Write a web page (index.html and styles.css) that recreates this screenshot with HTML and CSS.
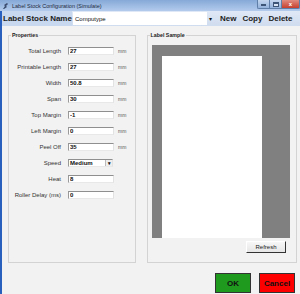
FILE: index.html
```html
<!DOCTYPE html>
<html lang="en">
  <head>
    <meta charset="UTF-8" />
    <meta name="viewport" content="width=device-width, initial-scale=1.0" />
    <title>Label Stock Configuration (Simulate)</title>
    <link rel="stylesheet" href="styles.css">
  </head>
  <body>
    <div class="window">
      <div class="titlebar">
        <svg class="app-icon" width="7" height="8" viewBox="0 0 7 8">
          <path d="M1 7 L3 4 L2 3 L5 1 L6 2 L4 4 L5 5 L2 7 Z" fill="#3a4d6e" />
        </svg>
        <span class="title-text">Label Stock Configuration (Simulate)</span>
        <div class="controls">
          <span class="ctl ctl-min"><i></i></span>
          <span class="ctl ctl-max"><i></i></span>
          <span class="ctl ctl-close">x</span>
        </div>
      </div>

      <div class="frame">
        <div class="toolbar">
          <span class="stock-label">Label Stock Name</span>
          <div class="combo">
            <span class="combo-text">Computype</span>
          </div>
          <span class="combo-arrow">▾</span>
          <span class="tool-btn">New</span>
          <span class="tool-btn">Copy</span>
          <span class="tool-btn">Delete</span>
        </div>

        <div class="content">
          <div class="groups">
            <fieldset class="group group-props">
              <legend>Properties</legend>
              <div class="row">
                <label>Total Length</label>
                <input type="text" value="27" />
                <span class="unit">mm</span>
              </div>
              <div class="row">
                <label>Printable Length</label>
                <input type="text" value="27" />
                <span class="unit">mm</span>
              </div>
              <div class="row">
                <label>Width</label>
                <input type="text" value="50.8" />
                <span class="unit">mm</span>
              </div>
              <div class="row">
                <label>Span</label>
                <input type="text" value="30" />
                <span class="unit">mm</span>
              </div>
              <div class="row">
                <label>Top Margin</label>
                <input type="text" value="-1" />
                <span class="unit">mm</span>
              </div>
              <div class="row">
                <label>Left Margin</label>
                <input type="text" value="0" />
                <span class="unit">mm</span>
              </div>
              <div class="row">
                <label>Peel Off</label>
                <input type="text" value="35" />
                <span class="unit">mm</span>
              </div>
              <div class="row">
                <label>Speed</label>
                <div class="select">
                  <span class="select-text">Medium</span>
                  <span class="select-btn">▾</span>
                </div>
              </div>
              <div class="row">
                <label>Heat</label>
                <input type="text" value="8" />
              </div>
              <div class="row">
                <label>Roller Delay (ms)</label>
                <input type="text" value="0" />
              </div>
            </fieldset>

            <fieldset class="group group-sample">
              <legend>Label Sample</legend>
              <div class="preview">
                <div class="preview-label"></div>
              </div>
              <div class="refresh-row">
                <button type="button" class="refresh">Refresh</button>
              </div>
            </fieldset>
          </div>

          <div class="actions">
            <button type="button" class="btn-ok">OK</button>
            <button type="button" class="btn-cancel">Cancel</button>
          </div>
        </div>
      </div>
    </div>
  </body>
</html>
```

FILE: styles.css
```css
body {
  margin: 0;
  width: 300px;
  height: 294px;
  overflow: hidden;
  background-color: #f2f2f2;
  font-family: "Liberation Sans", Arial, sans-serif;
  color: #222;
}
.window {
  display: flex;
  flex-direction: column;
  height: 294px;
}
.titlebar {
  height: 11px;
  flex: none;
  display: flex;
  align-items: center;
  background: linear-gradient(to bottom, #86a9d8, #b3cbec);
}
.app-icon {
  margin-left: 2px;
}
.title-text {
  margin-left: 3px;
  font-size: 5.5px;
  color: #1b2a40;
}
.controls {
  margin-left: auto;
  display: flex;
  align-self: flex-start;
}
.ctl {
  height: 9px;
  box-sizing: border-box;
  display: flex;
  align-items: center;
  justify-content: center;
  border: 1px solid #5f7ea8;
  border-top: none;
}
.ctl-min,
.ctl-max {
  width: 12px;
  background: linear-gradient(to bottom, #c3d5ee, #93b2db);
  border-right: none;
}
.ctl-min {
  border-bottom-left-radius: 2px;
}
.ctl-min i {
  width: 5px;
  height: 2px;
  margin-top: 2px;
  background-color: #fff;
  border: 1px solid #3d5577;
  box-sizing: border-box;
}
.ctl-max i {
  width: 6px;
  height: 5px;
  border: 1px solid #3d5577;
  border-top-width: 2px;
  box-sizing: border-box;
  background-color: #d8e4f4;
}
.ctl-close {
  width: 19px;
  background: linear-gradient(to bottom, #e08b7f, #c6402f);
  border-bottom-right-radius: 2px;
  color: #fff;
  font-size: 6px;
  font-weight: bold;
}
.frame {
  flex: 1;
  display: flex;
  flex-direction: column;
  border-left: 2px solid #2a60bd;
}
.toolbar {
  height: 15px;
  flex: none;
  display: flex;
  align-items: center;
  background: linear-gradient(to bottom, #dfe8f5, #cfdcef);
}
.stock-label {
  width: 70px;
  height: 15px;
  line-height: 15px;
  padding-left: 1px;
  box-sizing: border-box;
  font-size: 8px;
  font-weight: bold;
  color: #1c1c1c;
  background-color: #c8d8ee;
}
.combo {
  width: 134px;
  height: 13px;
  margin-left: 1px;
  display: flex;
  align-items: center;
  background-color: #fff;
}
.combo-text {
  margin-left: 2px;
  font-size: 6px;
  color: #111;
}
.combo-arrow {
  width: 7px;
  text-align: center;
  font-size: 6px;
  color: #111;
}
.tool-btn {
  margin-left: 6px;
  font-size: 8px;
  font-weight: bold;
  color: #1c1c1c;
}
.tool-btn:first-of-type {
  margin-left: 2px;
}
.content {
  flex: 1;
  display: flex;
  flex-direction: column;
  padding: 5px 3px 0 6px;
}
.groups {
  display: flex;
  gap: 11px;
  height: 232px;
}
.group {
  margin: 0;
  padding: 0;
  min-width: 0;
  border: 1px solid #d3d3d3;
  box-sizing: border-box;
}
.group legend {
  margin-left: 2px;
  padding: 0 1px;
  font-size: 5.3px;
  line-height: 8px;
  font-weight: bold;
  color: #1c1c1c;
}
.group-props {
  width: 128px;
  padding-top: 8px;
}
.group-sample {
  width: 151px;
  display: flex;
  flex-direction: column;
}
.row {
  display: flex;
  align-items: center;
  height: 8px;
  margin-bottom: 8px;
}
.row label {
  width: 52px;
  text-align: right;
  font-size: 6px;
  color: #333;
}
.row input,
.select {
  width: 46px;
  height: 8px;
  margin: 0 0 0 7px;
  padding: 0 1px;
  box-sizing: border-box;
  border: 1px solid;
  border-color: #8f8f8f #e2e2e2 #e8e8e8 #9a9a9a;
  background-color: #fff;
  font-family: inherit;
  font-size: 6px;
  font-weight: bold;
  color: #111;
}
.unit {
  margin-left: 4px;
  font-size: 5px;
  color: #555;
}
.select {
  width: 45px;
  display: flex;
  align-items: center;
  padding-right: 0;
}
.select-text {
  flex: 1;
}
.select-btn {
  width: 6px;
  height: 6px;
  line-height: 6px;
  text-align: center;
  font-size: 5px;
  border-left: 1px solid #bbb;
  background-color: #eee;
}
.preview {
  width: 138px;
  height: 193px;
  margin: 6px 0 0 4px;
  padding: 11px 0 0 10px;
  box-sizing: border-box;
  display: flex;
  background-color: #808080;
}
.preview-label {
  width: 100px;
  background-color: #fff;
}
.refresh-row {
  display: flex;
  justify-content: flex-end;
  padding: 3px 10px 0 0;
}
.refresh {
  width: 40px;
  height: 12px;
  padding: 0;
  font-family: inherit;
  font-size: 6px;
  color: #222;
  background: linear-gradient(to bottom, #f7f7f7, #e6e6e6);
  border: 1px solid;
  border-color: #fff #333 #333 #fff;
}
.actions {
  display: flex;
  justify-content: flex-end;
  gap: 8px;
  margin-top: 10px;
  padding-right: 2px;
}
.actions button {
  width: 36px;
  height: 20px;
  padding: 0;
  font-family: inherit;
  font-size: 8px;
  font-weight: bold;
  color: #111;
  border: 1px solid #333;
}
.btn-ok {
  background-color: #1f9a1f;
}
.btn-cancel {
  background-color: #ff0000;
}
```
